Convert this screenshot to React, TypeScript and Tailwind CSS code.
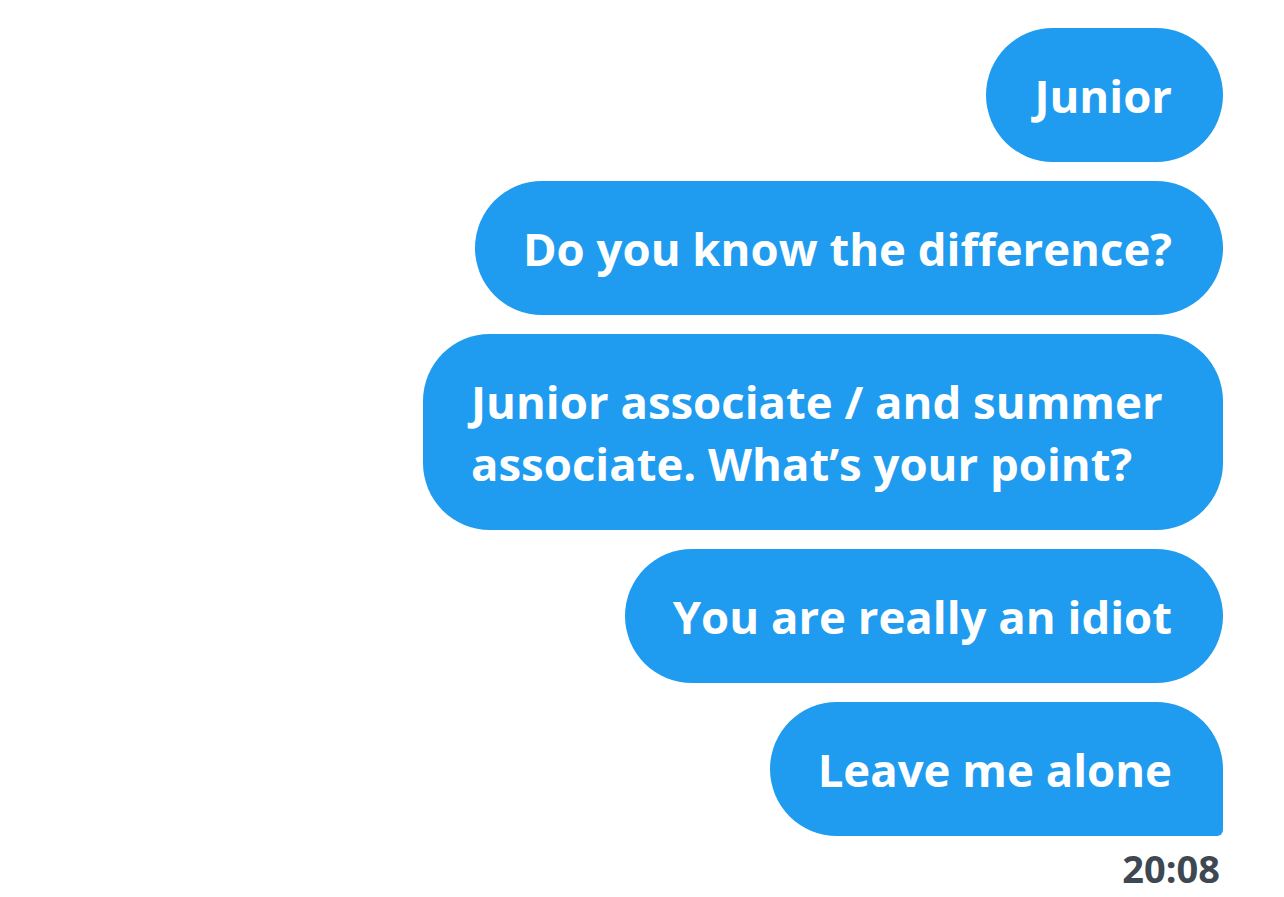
import React from 'react';

const messages = [
  'Junior',
  'Do you know the difference?',
  'Junior associate / and summer associate. What’s your point?',
  'You are really an idiot',
];

export default function App() {
  return (
    <div className="min-h-[897px] w-full bg-white font-['Open_Sans',sans-serif]">
      <div className="flex flex-col items-end gap-[19px] pt-[28px] pr-[61px]">
        {messages.map((m) => (
          <div
            key={m}
            className="max-w-[800px] rounded-[67px] bg-[#1f9bf0] py-[36px] pl-[48px] pr-[51px] text-[45.5px] leading-[62px] font-bold text-white"
          >
            {m}
          </div>
        ))}
        <div className="rounded-[67px] rounded-br-[6px] bg-[#1f9bf0] py-[36px] pl-[48px] pr-[51px] text-[45.5px] leading-[62px] font-bold text-white">
          Leave me alone
        </div>
        <div className="-mt-[9px] pr-[3px] text-[38px] leading-[44px] font-bold text-[#3d4852]">
          20:08
        </div>
      </div>
    </div>
  );
}
